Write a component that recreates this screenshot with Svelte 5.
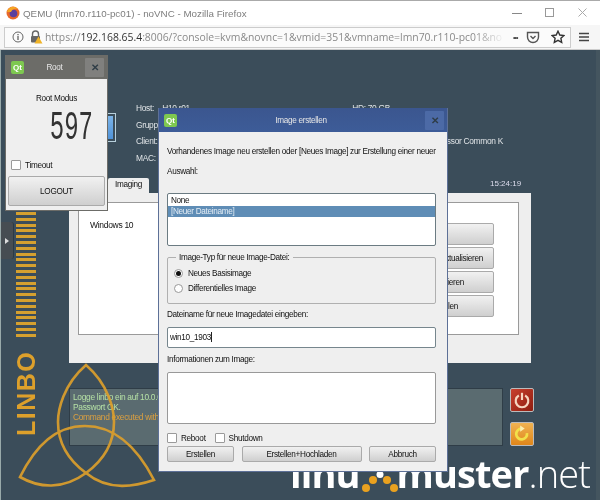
<script>
  const stripes = Array.from({ length: 22 });
</script>

<div class="browser">
  <header class="titlebar">
    <svg class="ff" viewBox="0 0 14 14" width="14" height="14">
      <circle cx="7" cy="7" r="6.5" fill="#e8682a" />
      <circle cx="7.5" cy="7.5" r="3.8" fill="#5b3f9e" />
      <path d="M1 6 C2 1 8 -1 12 3 C9 2 6 3 5 6 Z" fill="#f5a623" />
    </svg>
    <span class="wintitle">QEMU (lmn70.r110-pc01) - noVNC - Mozilla Firefox</span>
    <div class="winctl">
      <svg viewBox="0 0 12 12" width="12" height="12"><path d="M1 6.5h10" stroke="#888" /></svg>
      <svg viewBox="0 0 12 12" width="12" height="12"><rect x="1.5" y="1.5" width="8" height="8" fill="none" stroke="#999" /></svg>
      <svg viewBox="0 0 12 12" width="12" height="12"><path d="M1.5 1.5l8 8M9.5 1.5l-8 8" stroke="#aaa" /></svg>
    </div>
  </header>
  <div class="toolbar">
    <div class="urlbar">
      <svg viewBox="0 0 12 12" width="12" height="12">
        <circle cx="6" cy="6" r="5" fill="none" stroke="#666" />
        <path d="M6 5v4M6 3v1.2" stroke="#555" stroke-width="1.2" />
      </svg>
      <svg class="lock" viewBox="0 0 14 14" width="14" height="14">
        <path d="M3.5 6V4a3 3 0 0 1 6 0v2" fill="none" stroke="#666" stroke-width="1.4" />
        <rect x="2" y="6" width="9" height="6.5" rx="1" fill="#666" />
        <path d="M9.5 6.5l4 7h-8z" fill="#f0b429" />
      </svg>
      <span class="url">https://<b>192.168.65.4</b>:8006/?console=kvm&amp;novnc=1&amp;vmid=351&amp;vmname=lmn70.r110-pc01&amp;no</span>
      <span class="dots">•••</span>
      <svg viewBox="0 0 14 14" width="14" height="14">
        <path d="M1.5 2.5h11v4.5a5.5 5.5 0 0 1-11 0z" fill="none" stroke="#555" stroke-width="1.4" />
        <path d="M4.5 6l2.5 2.5L9.5 6" fill="none" stroke="#555" stroke-width="1.4" />
      </svg>
      <svg class="star" viewBox="0 0 14 14" width="14" height="14">
        <path d="M7 1.2l1.8 3.8 4.1.5-3 2.8.8 4.1L7 10.4l-3.7 2 .8-4.1-3-2.8 4.1-.5z" fill="none" stroke="#333" stroke-width="1.4" />
      </svg>
    </div>
    <svg class="burger" viewBox="0 0 12 12" width="12" height="12"><path d="M1 2.5h10M1 6h10M1 9.5h10" stroke="#444" stroke-width="1.3" /></svg>
  </div>

  <main class="desktop">
    <div class="bars">
      {#each stripes as _}<i></i>{/each}
    </div>
    <div class="linbo">LINBO</div>
    <div class="handle"><span></span></div>

    <section class="info">
      <div class="infocol">
        <p>Host: &nbsp; &nbsp;H10 r01</p>
        <p>Gruppe:</p>
        <p>Client:</p>
        <p>MAC:</p>
      </div>
      <div class="infocol right">
        <p class="hd">HD: 70 GB</p>
        <p>&nbsp;</p>
        <p>Prozessor Common K</p>
      </div>
    </section>
    <div class="bluebtn"></div>

    <div class="clock">15:24:19</div>
    <div class="tab">Imaging</div>
    <section class="panel">
      <div class="inner">
        <span class="os">Windows 10</span>
        <div class="actions">
          <button class="qbtn a1">Start</button>
          <button class="qbtn a2">Image aktualisieren</button>
          <button class="qbtn a3">Partitionieren</button>
          <button class="qbtn a4">Image erstellen</button>
        </div>
      </div>
    </section>

    <section class="console">
      <p class="ok">Logge linbo ein auf 10.0.0.1</p>
      <p class="ok">Passwort OK.</p>
      <p class="warn">Command executed with errors</p>
    </section>

    <svg class="triquetra" viewBox="0 0 170 150" width="170" height="150">
      <g fill="none" stroke="#dc9f2c" stroke-width="2.6">
        <path d="M85 15 C62 35 57 60 57 72 C57 95 70 112 85 123 C100 112 113 95 113 72 C113 60 108 35 85 15 Z" />
        <path d="M19 127 C35 95 55 76 84 76 C113 76 135 95 153 130 C135 136 108 142 85 123 C62 140 38 138 19 127 Z" />
      </g>
    </svg>

    <button class="power" aria-label="Ausschalten">
      <svg viewBox="0 0 20 20" width="18" height="18">
        <path d="M6.5 5a7 7 0 1 0 7 0" fill="none" stroke="#f6d5c0" stroke-width="2.4" />
        <path d="M10 2v8" stroke="#f6d5c0" stroke-width="2.4" />
      </svg>
    </button>
    <button class="reload" aria-label="Neu starten">
      <svg viewBox="0 0 20 20" width="18" height="18">
        <path d="M15.5 9a6 6 0 1 1-6-5" fill="none" stroke="#f2e04a" stroke-width="3" />
        <path d="M8 0.5l5 3.5-5 3.5z" fill="#fbeeb0" />
      </svg>
    </button>

    <div class="brand">
      <span class="b">linu</span>
      <svg viewBox="0 0 40 24" width="40" height="24">
        <circle cx="7" cy="17" r="4" fill="#e9a11f" />
        <circle cx="14" cy="9" r="4" fill="#e9a11f" />
        <circle cx="21" cy="3.5" r="3.5" fill="#fff" />
        <circle cx="28" cy="9" r="4" fill="#e9a11f" />
        <circle cx="35" cy="17" r="4" fill="#e9a11f" />
      </svg>
      <span class="b">muster</span><span class="n">.net</span>
    </div>

    <aside class="rootwin">
      <div class="qtbar grey">
        <span class="qt">Qt</span>
        <span class="qttitle">Root</span>
        <span class="x">✕</span>
      </div>
      <div class="rootbody">
        <div class="rootlabel">Root Modus</div>
        <div class="lcd"><span>597</span></div>
        <label class="chk"><i class="box"></i>Timeout</label>
        <button class="qbtn logout">LOGOUT</button>
      </div>
    </aside>

    <section class="dialog">
      <div class="qtbar blue">
        <span class="qt">Qt</span>
        <span class="qttitle">Image erstellen</span>
        <span class="x">✕</span>
      </div>
      <div class="dlgbody">
        <p class="intro">Vorhandenes Image neu erstellen oder [Neues Image] zur Erstellung einer neuer</p>
        <p class="auswahl">Auswahl:</p>
        <div class="list">
          <div class="row">None</div>
          <div class="row sel">[Neuer Dateiname]</div>
        </div>
        <fieldset>
          <legend>Image-Typ für neue Image-Datei:</legend>
          <label class="radio"><i class="dot on"></i>Neues Basisimage</label>
          <label class="radio"><i class="dot"></i>Differentielles Image</label>
        </fieldset>
        <p class="flabel">Dateiname für neue Imagedatei eingeben:</p>
        <div class="input">win10_1903<i class="caret"></i></div>
        <p class="ilabel">Informationen zum Image:</p>
        <div class="area"></div>
        <div class="checks">
          <label class="chk"><i class="box"></i>Reboot</label>
          <label class="chk"><i class="box"></i>Shutdown</label>
        </div>
        <div class="btnrow">
          <button class="qbtn">Erstellen</button>
          <button class="qbtn wide">Erstellen+Hochladen</button>
          <button class="qbtn">Abbruch</button>
        </div>
      </div>
    </section>
  </main>
</div>

<style>
  :global(body) { margin: 0; background: #3b4d5a; }
  * { box-sizing: border-box; }
  p { margin: 0; }
  .browser { width: 600px; height: 500px; overflow: hidden; display: flex; flex-direction: column; font-family: "Liberation Sans", sans-serif; background: #fff; filter: blur(0.35px); }
  .titlebar { height: 25px; flex: none; display: flex; align-items: center; padding-left: 6px; gap: 3px; background: #fff; border-top: 1px solid #aaa; }
  .wintitle { font: 9.8px "Liberation Sans", sans-serif; color: #7d7d7d; }
  .winctl { margin-left: auto; display: flex; gap: 21px; padding-right: 11px; }
  .toolbar { height: 25px; flex: none; display: flex; align-items: center; padding: 0 8px 0 4px; background: #f6f6f6; border-bottom: 1px solid #ccc; }
  .urlbar { width: 567px; height: 21px; display: flex; align-items: center; gap: 3px; padding: 0 3px 0 7px; background: #fbfbfb; border: 1px solid #ccc; }
  .lock { margin-left: 2px; }
  .url { font: 10.4px "Open Sans", sans-serif; color: #8a8a8a; flex: 0 0 460px; margin-left: -1px; white-space: nowrap; -webkit-mask-image: linear-gradient(90deg, #000 93%, transparent); mask-image: linear-gradient(90deg, #000 93%, transparent); }
  .url b { color: #333; font-weight: 400; }
  .dots { font: 7px "Liberation Sans", sans-serif; color: #444; margin: 0 6px 0 5px; letter-spacing: -1px; }
  .star { margin-left: 8px; }
  .burger { margin-left: 7px; }

  .desktop { position: relative; flex: 1; background: #3b4d5a; border-left: 1px solid #9aa; border-right: 4px solid #44555f; }
  .desktop p { white-space: nowrap; }

  .bars { position: absolute; left: 15px; top: 162px; width: 20px; display: flex; flex-direction: column; gap: 2.8px; }
  .bars i { height: 3px; background: #d5a02f; }
  .linbo { position: absolute; left: 14px; top: 300px; height: 86px; writing-mode: vertical-rl; transform: rotate(180deg); font: 700 25px "Liberation Sans", sans-serif; letter-spacing: 1.5px; color: #dda02b; text-align: center; line-height: 22px; }
  .handle { position: absolute; left: 0; top: 172px; width: 13px; height: 37px; background: #464d52; border-radius: 0 3px 3px 0; border-right: 1px solid #2c3a44; display: flex; align-items: center; justify-content: center; }
  .handle span { border-left: 4px solid #ddd; border-top: 3px solid transparent; border-bottom: 3px solid transparent; }
  .triquetra { position: absolute; left: 0; top: 300px; z-index: 1; opacity: 0.92; }

  .info { position: absolute; left: 135px; top: 51px; width: 367px; display: flex; justify-content: space-between; color: #dfe3e6; font-size: 8.4px; letter-spacing: -0.3px; }
  .infocol p { height: 16.7px; line-height: 14px; }
  .infocol.right { text-align: right; }
  .hd { padding-right: 113px; }
  .bluebtn { position: absolute; left: 98px; top: 63px; width: 17px; height: 29px; padding: 2px; background: linear-gradient(#7cb4e8, #4f92d8) content-box; border: 1px solid #b8d0dc; }

  .clock { position: absolute; left: 489px; top: 128px; color: #dde; font-size: 8px; line-height: 11px; }
  .tab { position: absolute; left: 107px; top: 128px; width: 41px; height: 16px; background: #eee; text-align: center; font-size: 8.2px; letter-spacing: -0.3px; line-height: 14px; color: #111; border-radius: 2px 2px 0 0; }
  .panel { position: absolute; left: 68px; top: 143px; width: 462px; height: 170px; background: #eee; padding: 9px 12px 28px 9px; }
  .inner { height: 100%; background: #fff; border: 1px solid #9a9a9a; position: relative; padding: 11px 0 0 11px; }
  .os { font-size: 8.5px; letter-spacing: -0.3px; color: #111; }
  .actions { position: absolute; right: 24px; top: 20px; width: 110px; display: flex; flex-direction: column; gap: 2px; }
  .actions .qbtn { height: 22px; text-align: right; }
  .actions .a1 { padding-right: 60px; }
  .actions .a2 { padding-right: 10px; }
  .actions .a3 { padding-right: 29px; }
  .actions .a4 { padding-right: 35px; }

  .qbtn { font: 8.2px "Liberation Sans", sans-serif; letter-spacing: -0.3px; color: #111; background: linear-gradient(#f1f1f1, #cfcfcf); border: 1px solid #aaa; border-radius: 2px; padding: 0; }

  .console { position: absolute; left: 68px; top: 338px; width: 434px; height: 58px; background: #5a6b70; border: 1px solid #2f3d47; padding: 3px 3px; font-size: 8.4px; letter-spacing: -0.3px; line-height: 10px; }
  .ok { color: #b5e0a5; }
  .warn { color: #dca040; }
  .power, .reload { position: absolute; left: 509px; width: 24px; height: 24px; padding: 0; border: 1px solid #bbb; border-radius: 2px; display: flex; align-items: center; justify-content: center; }
  .power { top: 338px; background: linear-gradient(135deg, #c8402e, #8e1d10); }
  .reload { top: 372px; background: linear-gradient(#efb251, #e0861a); }

  .brand { position: absolute; left: 289px; top: 412px; display: flex; align-items: flex-end; color: #fff; font-family: "Open Sans", sans-serif; font-size: 38px; line-height: 22px; height: 22px; white-space: nowrap; }
  .brand .b { font-weight: 700; letter-spacing: -0.9px; }
  .brand .n { font-weight: 300; letter-spacing: -0.9px; }
  .brand svg { margin: 0 -2px -11px -1px; flex: none; }

  .qtbar { display: flex; align-items: center; position: relative; color: #e6e6e6; font-size: 8.2px; letter-spacing: -0.3px; padding: 0 3px 0 5px; }
  .qt { width: 13px; height: 13px; border-radius: 2px; background: #7ec850; color: #fff; font-size: 8px; letter-spacing: 0; font-weight: 700; text-align: center; line-height: 13px; flex: none; }
  .qttitle { flex: 1; text-align: center; }
  .x { width: 19px; height: 19px; flex: none; text-align: center; line-height: 19px; font-size: 10px; font-weight: 700; color: #2f3d47; border-radius: 1px; }
  .grey { height: 25px; background: #6c6c68; }
  .grey .x { background: #80807e; }
  .blue { height: 24px; background: linear-gradient(#3b568f, #3d5c98); }
  .blue .x { background: #4c6aa6; }

  .rootwin { position: absolute; left: 4px; top: 5px; z-index: 4; width: 103px; height: 156px; background: #efefef; border: 1px solid #6c6c68; border-top: 0; display: flex; flex-direction: column; }
  .rootbody { flex: 1; display: flex; flex-direction: column; padding: 0 2px 4px 2px; font-size: 8.2px; letter-spacing: -0.3px; color: #111; }
  .rootlabel { text-align: center; margin-top: 15px; line-height: 9px; }
  .lcd { height: 25px; margin-top: 13px; display: flex; justify-content: flex-end; padding-right: 12px; }
  .lcd span { display: block; font: 40px/25px "Liberation Mono", monospace; letter-spacing: 0; color: #333; transform: scaleX(0.6); transform-origin: right center; }
  .rootbody .chk { margin: 19px 0 0 3px; }
  .logout { height: 30px; margin-top: 6px; }

  .chk { display: inline-flex; align-items: center; gap: 4px; font-size: 8.2px; letter-spacing: -0.3px; color: #111; }
  .box { width: 10px; height: 10px; background: #fff; border: 1px solid #9a9a9a; border-radius: 1px; flex: none; }

  .dialog { position: absolute; left: 157px; top: 58px; z-index: 2; width: 290px; height: 364px; background: #efefef; border: 1px solid #5d7097; border-top: 0; display: flex; flex-direction: column; }
  .dlgbody { flex: 1; padding: 14px 11px 0 8px; font-size: 8.2px; letter-spacing: -0.31px; color: #111; display: flex; flex-direction: column; }
  .intro { line-height: 12px; white-space: nowrap; }
  .auswahl { line-height: 12px; margin-top: 8px; }
  .list { height: 53px; margin-top: 15px; background: #fff; border: 1px solid #6b7b82; border-radius: 2px; padding-top: 1px; }
  .row { height: 11px; line-height: 11px; padding-left: 3px; }
  .sel { background: #5f8db6; color: #e4edf5; }
  fieldset { height: 51px; margin: 7px 0 0 0; padding: 4px 0 0 6px; border: 1px solid #b0b0b0; border-radius: 2px; }
  legend { padding: 0 3px; margin-left: 2px; line-height: 9px; }
  .radio { display: flex; align-items: center; gap: 5px; height: 15px; }
  .dot { width: 9px; height: 9px; border-radius: 50%; background: #fff; border: 1px solid #999; flex: none; position: relative; }
  .dot.on::after { content: ""; position: absolute; inset: 1px; border-radius: 50%; background: #111; }
  .flabel { margin-top: 5px; line-height: 12px; }
  .input { height: 21px; margin-top: 6px; background: #fff; border: 1px solid #76868d; border-radius: 2px; padding-left: 2px; line-height: 19px; }
  .caret { display: inline-block; width: 1px; height: 10px; background: #222; vertical-align: -2px; }
  .ilabel { margin-top: 6px; line-height: 12px; }
  .area { height: 52px; margin-top: 6px; background: #fff; border: 1px solid #999; border-radius: 2px; }
  .checks { display: flex; gap: 9px; margin-top: 9px; height: 10px; }
  .btnrow { display: flex; justify-content: space-between; margin-top: 3px; }
  .btnrow .qbtn { width: 67px; height: 16px; }
  .btnrow .wide { width: 120px; }
</style>
